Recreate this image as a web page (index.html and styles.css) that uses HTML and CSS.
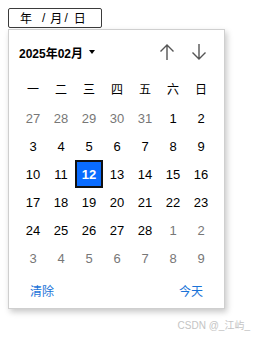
FILE: index.html
```html
<!DOCTYPE html>
<html lang="zh">
<head>
<meta charset="utf-8">
<link rel="stylesheet" href="styles.css">
</head>
<body>
<div class="field"><span class="seg yr">年</span><span class="seg slash s1">/</span><span class="seg">月</span><span class="seg slash s2">/</span><span class="seg">日</span></div>
<div class="popup">
  <div class="head">
    <div class="month">2025年02月<span class="caret"></span></div>
    <div class="arrows">
      <svg width="16" height="18" viewBox="0 0 16 18"><path d="M8 17V2M1.5 8.5L8 2l6.5 6.5" fill="none" stroke="#555" stroke-width="1.4"/></svg>
      <svg width="16" height="18" viewBox="0 0 16 18"><path d="M8 1v15M1.5 9.5L8 16l6.5-6.5" fill="none" stroke="#555" stroke-width="1.4"/></svg>
    </div>
  </div>
  <div class="week"><span>一</span><span>二</span><span>三</span><span>四</span><span>五</span><span>六</span><span>日</span></div>
  <div class="days">
    <span class="o">27</span><span class="o">28</span><span class="o">29</span><span class="o">30</span><span class="o">31</span><span>1</span><span>2</span>
    <span>3</span><span>4</span><span>5</span><span>6</span><span>7</span><span>8</span><span>9</span>
    <span>10</span><span>11</span><span class="sel">12</span><span>13</span><span>14</span><span>15</span><span>16</span>
    <span>17</span><span>18</span><span>19</span><span>20</span><span>21</span><span>22</span><span>23</span>
    <span>24</span><span>25</span><span>26</span><span>27</span><span>28</span><span class="o">1</span><span class="o">2</span>
    <span class="o">3</span><span class="o">4</span><span class="o">5</span><span class="o">6</span><span class="o">7</span><span class="o">8</span><span class="o">9</span>
  </div>
  <div class="foot"><span>清除</span><span>今天</span></div>
</div>
<div class="mark">CSDN @_江屿_</div>
</body>
</html>
```
FILE: styles.css
```css
html, body { margin: 0; padding: 0; background: #fff; }
body {
  padding: 8px;
  font-family: "Liberation Sans", Arial, "Noto Sans CJK SC", sans-serif;
  color: #000;
  position: relative;
  height: 339px;
  box-sizing: border-box;
  overflow: hidden;
}
.field {
  width: 94px;
  height: 20px;
  box-sizing: border-box;
  border: 1px solid #3b3b3b;
  border-radius: 2px;
  display: flex;
  align-items: center;
  padding-left: 11px;
  font-size: 12px;
  font-family: "Noto Sans CJK SC", sans-serif;
  line-height: 1;
}
.seg { display: inline-block; }
.seg.yr { margin-right: 10px; }
.seg.slash { font-family: "Liberation Sans", sans-serif; }
.seg.s1 { padding: 0 5px 0 0; }
.seg.s2 { padding: 0 6px 0 2px; }
.popup {
  margin-top: 1px;
  width: 217px;
  box-sizing: border-box;
  border: 1px solid #cfcfcf;
  background: #fff;
  box-shadow: 2px 3px 6px rgba(0,0,0,0.22);
  padding: 10px 10px 6px;
}
.head {
  height: 24px;
  display: flex;
  align-items: center;
  justify-content: space-between;
}
.month {
  font-weight: bold;
  font-size: 12px;
  font-family: "Liberation Sans", "Noto Sans CJK SC", sans-serif;
  display: flex;
  align-items: center;
}
.caret {
  width: 0; height: 0;
  border-left: 3.5px solid transparent;
  border-right: 3.5px solid transparent;
  border-top: 4px solid #000;
  margin-left: 6px;
}
.arrows { display: flex; gap: 16px; margin-right: 7px; }
.arrows svg { display: block; }
.week, .days {
  display: grid;
  grid-template-columns: repeat(7, 28px);
  grid-auto-rows: 28px;
  font-size: 13px;
}
.week { margin-top: 10px; margin-bottom: 2px; font-family: "Noto Sans CJK SC", sans-serif; font-size: 12px; }
.week span, .days span {
  display: flex;
  align-items: center;
  justify-content: center;
}
.days .o { color: #777; }
.days .sel {
  background: #0a6cff;
  border: 2px solid #111;
  color: #fff;
  font-weight: bold;
  box-sizing: border-box;
}
.foot {
  height: 24px;
  margin-top: 6px;
  display: flex;
  align-items: center;
  justify-content: space-between;
  padding: 0 11px;
  color: #1a73d8;
  font-size: 12px;
  font-family: "Noto Sans CJK SC", sans-serif;
}
.mark {
  position: absolute;
  right: 3px;
  bottom: 7px;
  font-size: 10px;
  color: #c4c4c4;
  font-family: "Liberation Sans", "Noto Sans CJK SC", sans-serif;
}
```
